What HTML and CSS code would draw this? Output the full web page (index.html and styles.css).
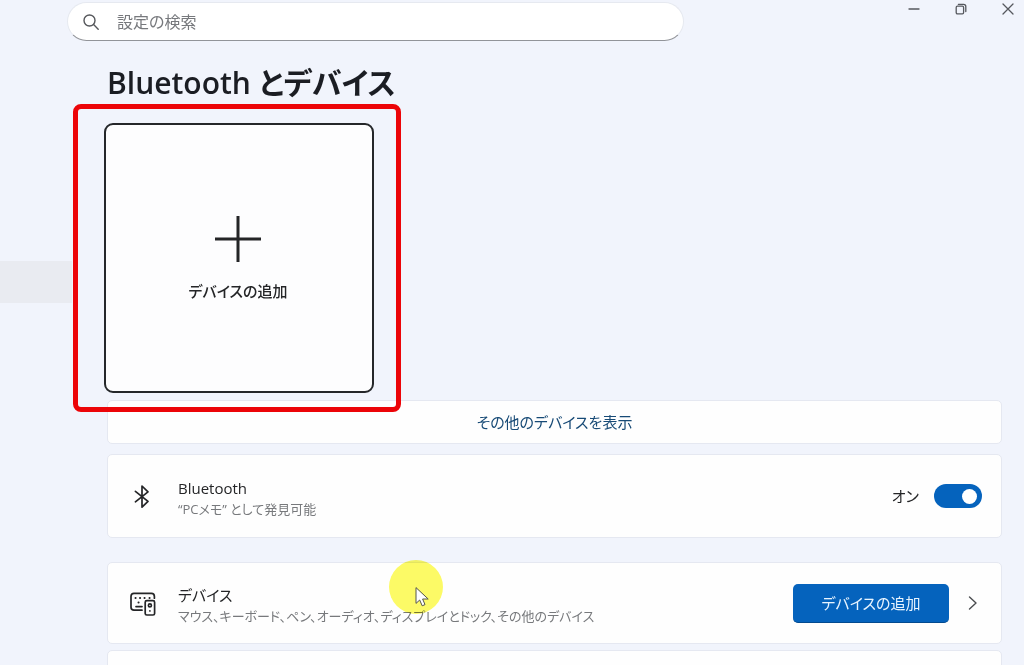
FILE: index.html
```html
<!DOCTYPE html>
<html lang="ja">
<head>
<meta charset="utf-8">
<meta name="viewport" content="width=device-width, initial-scale=1">
<title>設定</title>
<link rel="stylesheet" href="styles.css">
</head>
<body>
<header class="topbar">
  <label class="search">
    <svg class="search-icon" viewBox="0 0 16 16" aria-hidden="true"><circle cx="6.5" cy="6.5" r="5.5"/><path d="M10.6 10.6 15.2 15.2"/></svg>
    <input class="search-input" type="text" placeholder="設定の検索" aria-label="設定の検索">
  </label>
  <div class="window-controls">
    <button class="window-button" type="button" aria-label="最小化"><svg viewBox="0 0 12 12"><path d="M1 6H11"/></svg></button>
    <button class="window-button" type="button" aria-label="元に戻す"><svg viewBox="0 0 12 12"><rect x="1.2" y="3.2" width="7.4" height="7.6" rx="1.2"/><path d="M3.4 1.4H8.6Q10.8 1.4 10.8 3.6V8.6"/></svg></button>
    <button class="window-button" type="button" aria-label="閉じる"><svg viewBox="0 0 12 12"><path d="M1 1 11 11M11 1 1 11"/></svg></button>
  </div>
</header>
<div class="layout">
  <nav class="sidebar" aria-label="設定"><a class="nav-item" href="#devices" aria-label="Bluetooth とデバイス" aria-current="page"></a></nav>
  <main class="content" id="devices">
    <h1 class="title">Bluetooth とデバイス</h1>
    <div class="tile-area">
      <button class="tile" type="button">
        <svg class="plus" viewBox="0 0 48 48" aria-hidden="true"><path d="M1 24H47M24 1V47"/></svg>
        <span>デバイスの追加</span>
      </button>
      <div class="highlight"></div>
    </div>
    <a class="card more" href="#more">その他のデバイスを表示</a>
    <section class="card setting bluetooth">
      <svg class="icon" viewBox="0 0 28 28" aria-hidden="true"><path d="M7.4 9.4 20 19.4 14 25.2V4L20 9.8 7.4 19.8"/></svg>
      <div class="text"><h2 class="name">Bluetooth</h2><p class="detail">“PCメモ” として発見可能</p></div>
      <label class="switch"><span>オン</span><input class="toggle" type="checkbox" role="switch" checked></label>
    </section>
    <section class="card setting devices">
      <svg class="icon" viewBox="0 0 28 28" aria-hidden="true">
        <path d="M14 21.2H6Q3 21.2 3 18.2V7.4Q3 4.4 6 4.4H23.4Q26.4 4.4 26.4 7.4V9.2"/>
        <rect x="17.2" y="11.6" width="9.4" height="14.4" rx="1.6"/>
        <path class="keys" d="M7.5 9H7.6M12 9H12.1M16.5 9H16.6M21.5 9H21.6M10.5 13.4H10.6"/>
        <path d="M8 17.6H14M21.9 21.8V22"/><circle cx="21.9" cy="16.4" r="1.5"/>
      </svg>
      <div class="text"><h2 class="name">デバイス</h2><p class="detail">マウス、キーボード、ペン、オーディオ、ディスプレイとドック、その他のデバイス</p></div>
      <button class="primary" type="button">デバイスの追加</button>
      <button class="chevron" type="button" aria-label="開く"><svg viewBox="0 0 16 16"><path d="M4.5 2 11 8 4.5 14"/></svg></button>
      <div class="pointer"><svg viewBox="0 0 14 20"><path d="M1 1V16.4L4.7 13 7.2 18.8 10 17.6 7.6 12H12.8Z"/></svg></div>
    </section>
    <section class="card next"></section>
  </main>
</div>
</body>
</html>
```
FILE: styles.css
```css
* { box-sizing: border-box; }

body {
  margin: 0;
  height: 100vh;
  overflow: hidden;
  background: #f1f4fc;
  color: #242527;
  font-family: "Open Sans", "Noto Sans CJK JP", sans-serif;
  font-size: 15px;
  line-height: 20px;
  font-feature-settings: "palt";
}

button, input { font: inherit; font-feature-settings: inherit; color: inherit; }
button { border: 0; padding: 0; background: none; }
svg { display: block; fill: none; stroke: currentColor; stroke-linecap: round; stroke-linejoin: round; }
h1, h2, p { margin: 0; font-weight: 400; }

.topbar {
  display: flex;
  justify-content: space-between;
  align-items: flex-start;
  padding: 2px 0 0 67px;
}

.search {
  display: flex;
  align-items: center;
  gap: 18px;
  flex: 0 1 617px;
  height: 39px;
  padding: 0 15px;
  border: 1px solid #e6e9f0;
  border-bottom-color: #929499;
  border-radius: 20px;
  background: #fff;
}
.search-icon { width: 16px; height: 16px; stroke: #55575b; stroke-width: 1.4; }
.search-input { flex: 1; min-width: 0; border: 0; padding: 0; background: none; outline: 0; font-size: 16px; }
.search-input::placeholder { color: #77797d; opacity: 1; }

.window-controls { display: flex; color: #56585e; margin-right: -7px; }
.window-button { display: grid; place-items: center; width: 47px; height: 14px; }
.window-button svg { width: 12px; height: 12px; stroke-width: 1.3; }

.layout { display: flex; }
.sidebar { flex: 0 0 72px; padding-top: 220px; }
.nav-item { display: block; height: 42px; background: #e9ebf1; }

.content { flex: 1; min-width: 0; padding: 18px 22px 0 35px; }
.title { font-size: 30px; line-height: 48px; font-weight: 600; color: #1b1d23; }

.tile-area { position: relative; width: 270px; margin: 16px 0 7px -3px; }
.tile {
  display: flex;
  flex-direction: column;
  align-items: center;
  justify-content: center;
  gap: 18px;
  width: 100%;
  aspect-ratio: 1;
  padding-right: 2px;
  border: 2px solid #25272a;
  border-radius: 9px;
  background: #fdfdfe;
  font-weight: 500;
}
.plus { width: 48px; height: 48px; stroke-width: 3; stroke-linecap: butt; }
.highlight {
  position: absolute;
  inset: -19px -27px -19px -31px;
  border: 5px solid #ec0408;
  border-radius: 8px;
  pointer-events: none;
}

.card { border: 1px solid #e5e8f1; border-radius: 5px; background: #fefefe; }
.more { display: grid; place-items: center; height: 44px; margin-bottom: 10px; color: #174a76; text-decoration: none; }
.setting { position: relative; display: flex; align-items: center; padding: 0 19px 0 20px; }
.bluetooth { height: 84px; margin-bottom: 24px; }
.devices { height: 82px; margin-bottom: 6px; }
.next { height: 82px; }

.icon { flex: none; width: 28px; height: 28px; margin-right: 22px; stroke-width: 1.7; }
.icon .keys { stroke-width: 2; }
.text { flex: 1; min-width: 0; padding-top: 3px; }
.name { font-size: 15px; line-height: 22px; }
.detail { font-size: 13px; line-height: 20px; color: #77797c; }

.switch { display: flex; align-items: center; gap: 15px; }
.toggle {
  appearance: none;
  display: flex;
  justify-content: flex-end;
  align-items: center;
  width: 48px;
  height: 24px;
  margin: 0;
  padding: 0 5px;
  border-radius: 12px;
  background: #0563bd;
}
.toggle::before { content: ""; width: 15px; height: 15px; border-radius: 50%; background: #fff; }

.primary {
  width: 156px;
  height: 39px;
  border-bottom: 1px solid #034a8f;
  border-radius: 5px;
  background: #0563bd;
  color: #e8f4ff;
}
.chevron { margin: 0 1px 0 16px; color: #4b4d50; }
.chevron svg { width: 16px; height: 16px; stroke-width: 1.4; }

.pointer {
  position: absolute;
  left: 281px;
  top: -3px;
  width: 54px;
  height: 54px;
  padding: 27px 0 0 26px;
  border-radius: 50%;
  background: #fdfb66;
  mix-blend-mode: multiply;
}
.pointer svg { width: 14px; height: 20px; fill: #fff; stroke: #55564e; stroke-width: 1; }
```
